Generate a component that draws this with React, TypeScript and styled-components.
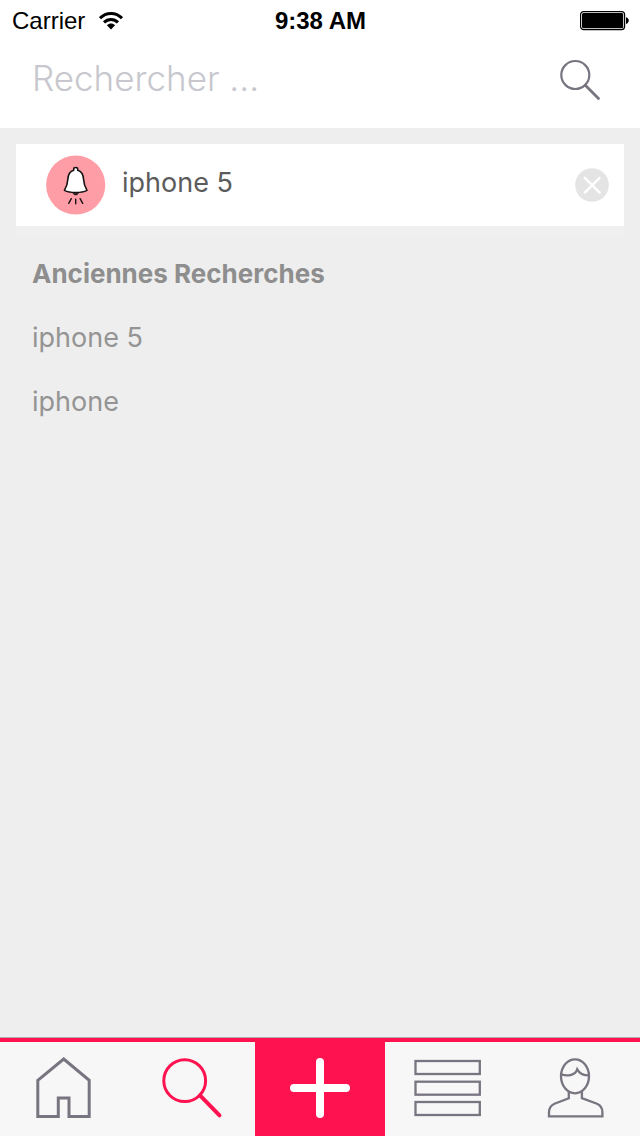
import React from "react";
import styled, { createGlobalStyle } from "styled-components";

const pink = "#ff1250";
const slate = "#787480";

const GlobalStyle = createGlobalStyle`
  * { box-sizing: border-box; }
  body {
    margin: 0;
    background: #eeeeee;
    font-family: Inter, "Open Sans", sans-serif;
  }
  button { border: 0; padding: 0; background: none; font: inherit; cursor: pointer; }
  svg { display: block; }
`;

const Screen = styled.div`
  min-height: 100vh;
  display: flex;
  flex-direction: column;
`;

const StatusBar = styled.div`
  display: grid;
  grid-template-columns: 1fr auto 1fr;
  align-items: center;
  height: 40px;
  padding: 2px 11px 0 12px;
  background: #fff;
  color: #000;
  font-family: "Liberation Sans", Arial, sans-serif;
  font-size: 24px;
  line-height: 28px;
`;

const Carrier = styled.div`
  display: flex;
  align-items: center;
  gap: 14px;
`;

const Clock = styled.time`
  font-weight: 700;
`;

const Battery = styled.div`
  justify-self: end;
`;

const SearchBar = styled.form`
  display: flex;
  align-items: center;
  height: 88px;
  padding: 0 39px 8px 32px;
  background: #fff;
`;

const SearchInput = styled.input`
  flex: 1;
  min-width: 0;
  height: 56px;
  border: 0;
  padding: 0 0 4px;
  outline: none;
  background: none;
  color: #555;
  font: 350 35px Inter, "Open Sans", sans-serif;
  &::placeholder { color: #c7c7cd; opacity: 1; }
`;

const Main = styled.main`
  flex: 1;
  padding: 16px;
`;

const AlertCard = styled.section`
  display: flex;
  align-items: center;
  gap: 16px;
  height: 92px;
  padding: 0 15px 0 30px;
  background: #fff;
  border-bottom: 10px solid #f0f0f0;
`;

const AlertLabel = styled.span`
  flex: 1;
  padding-bottom: 4px;
  color: #5c5c5c;
  font-size: 27px;
  line-height: 32px;
  font-weight: 400;
`;

const History = styled.section`
  padding: 6px 16px;
`;

const HistoryTitle = styled.h2`
  margin: 0;
  color: #8e8e8e;
  font-size: 26px;
  line-height: 64px;
  font-weight: 700;
`;

const HistoryList = styled.ul`
  margin: 0;
  padding: 0;
  list-style: none;
`;

const HistoryLink = styled.a`
  display: block;
  color: #949494;
  font-size: 27px;
  line-height: 64px;
  font-weight: 400;
  text-decoration: none;
`;

const TabBar = styled.nav`
  display: grid;
  grid-template-columns: 1fr 1fr 130px 1fr 1fr;
  height: 99px;
  border-top: 1px solid #b0a8ac;
  background: #f7f7f7;
  box-shadow: inset 0 4px 0 ${pink};
  padding-top: 4px;
`;

const Tab = styled.a<{ $active?: boolean }>`
  display: flex;
  align-items: center;
  justify-content: center;
  color: ${(p) => (p.$active ? pink : slate)};
`;

const AddButton = styled.button`
  display: flex;
  align-items: center;
  justify-content: center;
  && { background: ${pink}; }
  color: #fff;
`;

const TabIcon = ({ children, stroke = 3 }: { children: React.ReactNode; stroke?: number }) => (
  <svg width="72" height="72" viewBox="0 0 72 72" fill="none" stroke="currentColor" strokeWidth={stroke} aria-hidden="true">
    {children}
  </svg>
);

const history = ["iphone 5", "iphone"];

export default function App() {
  return (
    <Screen>
      <GlobalStyle />
      <StatusBar>
        <Carrier>
          <span>Carrier</span>
          <svg width="24" height="20" viewBox="0 0 24 20" fill="none" stroke="#000" strokeWidth="3" aria-hidden="true">
            <path d="M1 7.2C7 .8 17 .8 23 7.2" />
            <path d="M5 11.4C9 7.4 15 7.4 19 11.4" />
            <path d="M7.9 14.3C10.4 12 13.6 12 16.1 14.3L12 18.6Z" fill="#000" stroke="none" />
          </svg>
        </Carrier>
        <Clock>9:38 AM</Clock>
        <Battery>
          <svg width="49" height="20" viewBox="0 0 49 20" aria-hidden="true">
            <rect x=".6" y=".6" width="44" height="18" rx="3" fill="none" stroke="#000" strokeWidth="1.2" />
            <rect x="2" y="2" width="41.2" height="15.2" rx="1.5" />
            <path d="M46 6.2C49.7 7 49.7 12.200 46 13Z" />
          </svg>
        </Battery>
      </StatusBar>

      <SearchBar role="search" onSubmit={(e) => e.preventDefault()}>
        <SearchInput type="text" aria-label="Rechercher" placeholder="Rechercher ..." />
        <button type="submit" aria-label="Lancer la recherche">
          <svg width="42" height="42" viewBox="0 0 42 42" fill="none" stroke={slate} strokeWidth="2.2" aria-hidden="true">
            <circle cx="16.300" cy="16" r="14" />
            <path d="M26.300 26.300L39.500 39.500" strokeWidth="2.800" strokeLinecap="round" />
          </svg>
        </button>
      </SearchBar>

      <Main>
        <AlertCard>
          <svg width="60" height="60" viewBox="0 0 60 60" fill="none" stroke="#161214" strokeWidth="1.600" strokeLinecap="round" strokeLinejoin="round" aria-hidden="true">
            <circle cx="29.700" cy="30" r="29.600" fill="#ff9da6" stroke="none" />
            <path d="M27 38.200C27.600 40.600 31.800 40.600 32.400 38.200Z" fill="#161214" strokeWidth=".6" />
            <path d="M27.700 15.200V14C27.700 11.900 31.700 11.900 31.700 14V15.200C35.600 16.400 37.300 19.600 37.500 24C37.800 29.400 38.800 31.600 41 35.400C35.500 38.200 23.900 38.200 18.400 35.400C20.600 31.600 21.600 29.400 21.900 24C22.100 19.600 23.800 16.400 27.700 15.200Z" fill="#fff" />
            <path d="M25.300 43.700L22.700 48.300M29.700 44.300V48.700M34.100 43.700L36.700 48.300" strokeWidth="1.400" />
          </svg>
          <AlertLabel>iphone 5</AlertLabel>
          <button type="button" aria-label="Supprimer">
            <svg width="34" height="34" viewBox="0 0 34 34" aria-hidden="true">
              <circle cx="17" cy="17" r="16.800" fill="#e4e4e4" />
              <path d="M9.800 9.800L24.600 24.600M24.600 9.800L9.800 24.600" stroke="#fff" strokeWidth="2.400" strokeLinecap="round" />
            </svg>
          </button>
        </AlertCard>

        <History>
          <HistoryTitle>Anciennes Recherches</HistoryTitle>
          <HistoryList>
            {history.map((term) => (
              <li key={term}>
                <HistoryLink href="#">{term}</HistoryLink>
              </li>
            ))}
          </HistoryList>
        </History>
      </Main>

      <TabBar>
        <Tab href="#" aria-label="Accueil">
          <TabIcon>
            <path d="M9.800 27.300L35.700 6L61.200 27.300V63.500H41V45H30.300V63.500H9.800Z" />
          </TabIcon>
        </Tab>
        <Tab href="#" aria-label="Recherche" aria-current="page" $active>
          <TabIcon>
            <circle cx="29.700" cy="27.700" r="20.900" />
            <path d="M45 42.300L64.500 62.300" strokeWidth="4" strokeLinecap="round" />
          </TabIcon>
        </Tab>
        <AddButton type="button" aria-label="Ajouter">
          <TabIcon stroke={8}>
            <path d="M10 35H62M36 9V61" strokeLinecap="round" />
          </TabIcon>
        </AddButton>
        <Tab href="#" aria-label="Liste">
          <TabIcon stroke={2.3}>
            <rect x="2.500" y="8" width="64.300" height="13" />
            <rect x="2.500" y="28.700" width="64.300" height="13" />
            <rect x="2.500" y="49" width="64.300" height="13" />
          </TabIcon>
        </Tab>
        <Tab href="#" aria-label="Profil">
          <TabIcon stroke={2.3}>
            <ellipse cx="35" cy="23.300" rx="14" ry="17" />
            <path d="M21.800 21.700C28 23.400 35.300 22.200 37.200 16.300C39.500 20.500 43 22.800 49 22.200" />
            <path d="M28.800 38V45.200L14.500 50.700C10.500 52.500 9 55.500 9 59V63.300H62.400V59C62.400 55.500 61 52.500 57 50.700L41.900 45.200V38" />
          </TabIcon>
        </Tab>
      </TabBar>
    </Screen>
  );
}
